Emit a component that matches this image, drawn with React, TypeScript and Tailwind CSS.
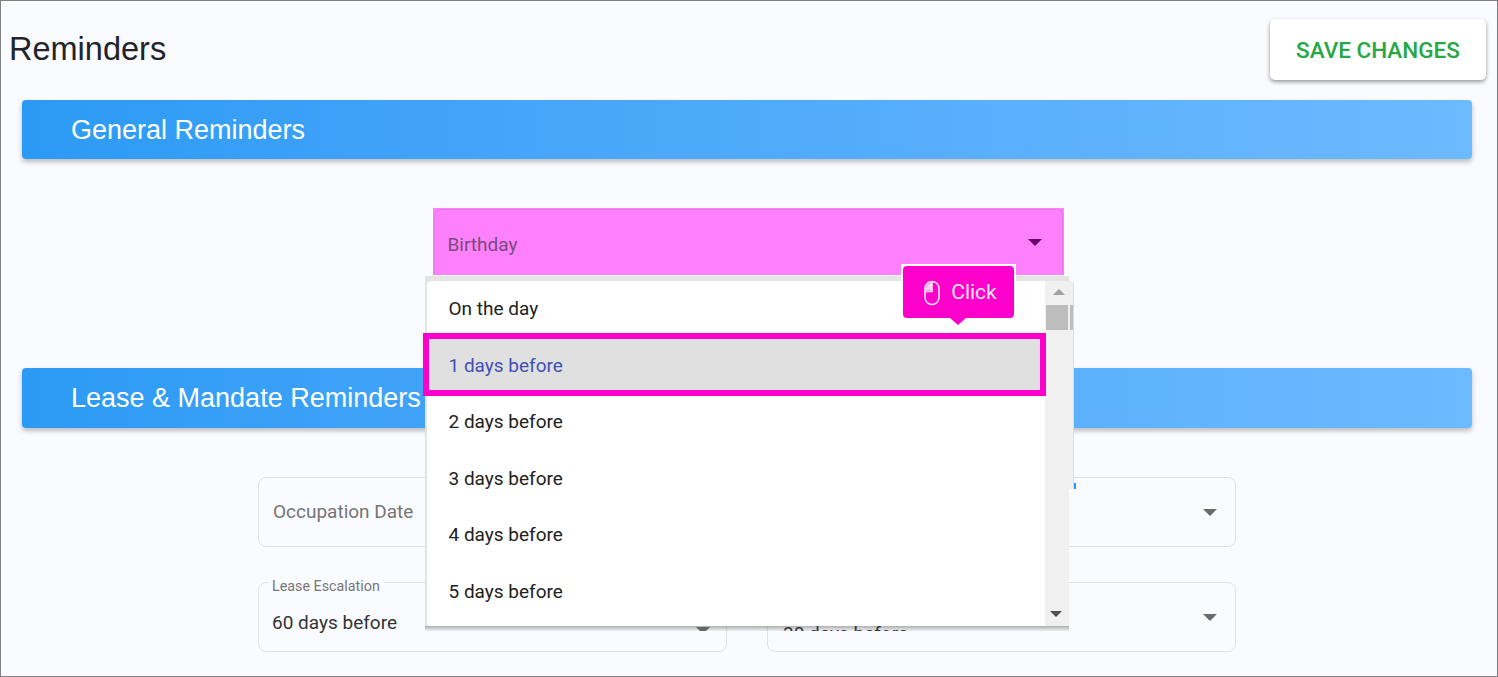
const days = ['On the day', '1 days before', '2 days before', '3 days before', '4 days before', '5 days before'];

const Caret = ({ className }: { className: string }) => (
  <svg width="14" height="7" viewBox="0 0 14 7" className={className}>
    <path d="M0 0h14L7 7z" fill="currentColor" />
  </svg>
);

const Banner = ({ title, className }: { title: string; className: string }) => (
  <div
    className={`flex items-center rounded-[4px] bg-gradient-to-r from-[#2b9af5] to-[#6cbaff] pl-[49px] text-[27px] text-white shadow-[0_3px_5px_rgba(0,0,0,0.25)] font-['Liberation_Sans',sans-serif] ${className}`}
  >
    {title}
  </div>
);

const Field = ({ label, value, placeholder }: { label?: string; value?: string; placeholder?: string }) => (
  <div className="relative flex h-[70px] w-[469px] items-center rounded-[8px] border border-[#dfe1e5] pl-[14px] pr-[18px]">
    {label && (
      <span className="absolute left-[9px] top-[-5px] bg-[#fafbff] px-[4px] text-[14.3px] leading-[16px] text-[#777]">{label}</span>
    )}
    {placeholder && <span className="mt-[1px] text-[19px] text-[#757575]">{placeholder}</span>}
    {value && <span className="ml-[-1px] mt-[12px] text-[19px] text-[#333]">{value}</span>}
    <Caret className="ml-auto text-[#6b6b6b]" />
  </div>
);

export default function App() {
  return (
    <div className="relative h-[677px] w-[1498px] overflow-hidden border border-[#808080] bg-[#fafbff] font-['Roboto',sans-serif]">
      <div className="flex items-start justify-between pl-[8px] pr-[11px] pt-[18px]">
        <h1 className="mt-[10px] text-[32.5px] leading-[40px] text-[#212529] font-['Liberation_Sans',sans-serif]">Reminders</h1>
        <button className="flex h-[61px] w-[216px] items-center justify-center rounded-[5px] bg-white pt-[3px] text-[22.5px] font-medium text-[#28a745] shadow-[0_2px_4px_rgba(0,0,0,0.4)]">
          SAVE CHANGES
        </button>
      </div>

      <div className="pl-[21px] pr-[25px] pt-[20px]">
        <Banner title="General Reminders" className="h-[59px] pt-[2px]" />
      </div>

      <div className="flex justify-center pr-[2px] pt-[49px]">
        <div className="h-[67px] w-[631px] bg-[#ff80fd] px-[1px] pt-[1px]">
          <div className="flex h-full items-center justify-between rounded-t-[6px] border border-b-0 border-[#e878e8] pl-[13px] pr-[20px] text-[19px] text-[#7a4a7a]">
            <span className="mt-[5px]">Birthday</span>
            <Caret className="text-[#660066]" />
          </div>
        </div>
      </div>

      <div className="pl-[21px] pr-[25px] pt-[93px]">
        <Banner title="Lease & Mandate Reminders" className="h-[60px]" />
      </div>

      <div className="flex flex-col gap-[35px] pl-[257px] pt-[49px]">
        <div className="flex gap-[40px]">
          <Field placeholder="Occupation Date" />
          <Field />
        </div>
        <div className="flex gap-[40px]">
          <Field label="Lease Escalation" value="60 days before" />
          <Field />
        </div>
      </div>

      {/* dropdown open over the page */}
      <div className="absolute left-[424px] top-[483px] h-[60px] w-[3px] bg-[#2b8fe0]" />
      <div className="absolute left-[1072px] top-[482px] h-[6px] w-[3px] bg-[#2b9af5]" />
      <div className="absolute left-[424px] top-[275px] h-[350px] w-[644px] bg-[#e4e4e4]" />
      <div className="absolute left-[426px] top-[280px] flex h-[345px] w-[647px] overflow-hidden rounded-[4px] bg-white [clip-path:polygon(0_0,100%_0,100%_208px,642px_208px,642px_100%,0_100%)]">
        <ul className="w-[618px] text-[19px] text-[#212121]">
          {days.map((d, i) => (
            <li key={d} className={`flex h-[56.6px] items-center pl-[21.5px] ${i === 1 ? 'bg-[#e0e0e0] text-[#3f51b5]' : ''}`}>
              {d}
            </li>
          ))}
        </ul>
        <div className="flex w-[29px] flex-col items-center justify-between border-r border-[#ddd] bg-[#f0f0f0] py-[6px]">
          <div className="flex w-full flex-col items-center">
            <span className="mt-[2px] h-0 w-0 border-x-[6px] border-b-[6px] border-x-transparent border-b-[#a0a0a0]" />
            <div className="mt-[10px] flex w-full gap-[2px] pl-[1px]">
              <span className="h-[25px] w-[22px] bg-[#bdbdbd]" />
              <span className="h-[25px] w-[3px] bg-[#bdbdbd]" />
            </div>
          </div>
          <span className="mb-[3px] mr-[6px] h-0 w-0 border-x-[6px] border-t-[6px] border-x-transparent border-t-[#505050]" />
        </div>
      </div>

      {/* shadow strip under the menu, the fields behind it show through */}
      <div className="absolute left-[424px] top-[625px] h-[5px] w-[644px] overflow-hidden bg-gradient-to-b from-black/30 to-black/5">
        <span className="absolute left-[358px] top-[-3px] text-[19px] leading-[22px] text-[#333]">30 days before</span>
        <Caret className="absolute left-[271px] top-[1px] text-[#666]" />
      </div>

      <div className="absolute left-[422px] top-[332px] h-[63px] w-[623px] border-[6px] border-[#ff00cc]" />

      <div className="absolute left-[900px] top-[263px] bg-white p-[2px] pb-0">
        <div className="relative flex h-[52px] w-[111px] items-center justify-center gap-[10px] rounded-[4px] bg-[#ff00cc] pl-[3px] pt-[2px] text-[21px] text-[#ffe6fa]">
          <svg width="18" height="26" viewBox="0 0 18 26" fill="none" stroke="currentColor" strokeWidth="1.6">
            <rect x="2" y="1.5" width="14" height="23" rx="7" />
            <path d="M2 11.5h7V1.5" />
            <path d="M9 2.5v8H3V8a6 6 0 0 1 6-5.500z" fill="currentColor" stroke="none" opacity="0.9" />
          </svg>
          <span>Click</span>
          <span className="absolute bottom-[-7px] left-[47px] h-0 w-0 border-x-[8px] border-t-[7px] border-x-transparent border-t-[#ff00cc]" />
        </div>
      </div>
    </div>
  );
}
